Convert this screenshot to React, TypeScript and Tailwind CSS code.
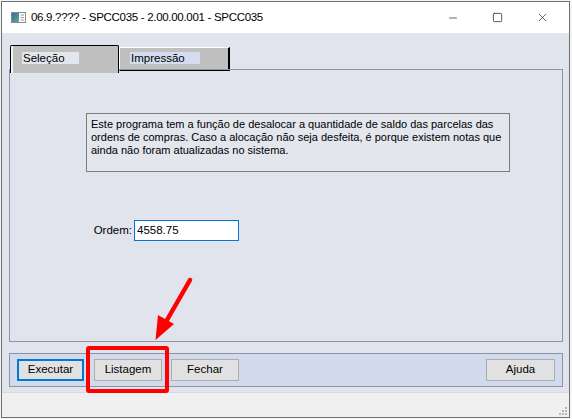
import { Minus, Square, X } from 'lucide-react'

const font = { fontFamily: '"Liberation Sans", Arial, sans-serif' }

function AppIcon() {
  return (
    <svg width="15" height="11" viewBox="0 0 15 11" className="shrink-0">
      <defs>
        <linearGradient id="ic" x1="0" y1="0" x2="1" y2="1">
          <stop offset="0" stopColor="#2f6fa8" />
          <stop offset="1" stopColor="#5fae7a" />
        </linearGradient>
      </defs>
      <rect x="0.5" y="0.5" width="14" height="10" fill="#fff" stroke="#8a8a8a" />
      <rect x="1" y="1" width="7" height="9" fill="url(#ic)" />
      <line x1="9.5" y1="3" x2="13" y2="3" stroke="#9a9a9a" />
      <line x1="9.5" y1="5.5" x2="13" y2="5.5" stroke="#9a9a9a" />
      <line x1="9.5" y1="8" x2="13" y2="8" stroke="#9a9a9a" />
    </svg>
  )
}

function Btn({ label, focused, className = '' }: { label: string; focused?: boolean; className?: string }) {
  return (
    <div
      className={
        'h-[22px] flex items-center justify-center text-[11.5px] text-black bg-[#e1e1e1] ' +
        (focused ? 'border-2 border-[#0078d7] ' : 'border border-[#adadad] ') +
        className
      }
    >
      {label}
    </div>
  )
}

export default function App() {
  return (
    <div className="relative w-[572px] h-[419px] bg-[#f4f4f4] overflow-hidden" style={font}>
      {/* window */}
      <div className="ml-[1px] mt-[1px] w-[569px] h-[417px] border border-[#707070] flex flex-col bg-white">
        {/* title bar */}
        <div className="h-[31px] shrink-0 bg-white flex items-center pl-[9px]">
          <AppIcon />
          <span className="ml-[5px] text-[11.5px] tracking-[-0.3px] text-black">06.9.???? - SPCC035 - 2.00.00.001 - SPCC035</span>
          <div className="ml-auto flex items-center h-full">
            <div className="w-[45px] flex justify-center"><Minus className="w-[12px] h-[12px]" strokeWidth={1.2} /></div>
            <div className="w-[45px] flex justify-center"><Square className="w-[11px] h-[11px]" strokeWidth={1.4} absoluteStrokeWidth /></div>
            <div className="w-[45px] flex justify-center mr-[4px]"><X className="w-[13px] h-[13px]" strokeWidth={1.1} /></div>
          </div>
        </div>

        {/* content */}
        <div className="flex-1 bg-[#e1e4ec] pl-[7px] pr-[6px] pt-[12px] flex flex-col text-[11px] text-black">
          {/* tabs */}
          <div className="h-[24px] flex items-start shrink-0">
            <div className="relative z-10 ml-[1px] w-[109px] h-[28px] bg-[#c0c0c0] border border-b-0 border-black rounded-t-[2px] shadow-[inset_2px_0_0_#f4f4f4] pl-[11px] pt-[6px]">
              <div className="w-[57px] h-[12px] bg-[#e4e6ee] leading-[12px] pl-[1px] text-[11.5px]">Seleção</div>
            </div>
            <div className="mt-[2px] w-[111px] h-[24px] bg-[#c0c0c0] border-t border-l border-white border-r-2 border-b border-r-black border-b-black pl-[10px] pt-[4px]">
              <div className="w-[70px] h-[12px] bg-[#d5dcef] leading-[12px] pl-[1px] text-[11.5px]">Impressão</div>
            </div>
          </div>

          {/* tab panel */}
          <div className="h-[273px] shrink-0 border border-[#8d95a3] flex flex-col">
            <div className="ml-[76px] mt-[43px] w-[424px] h-[59px] border border-[#7d7d7d] bg-[#e3e6ed] pl-[4px] pr-[2px] pt-[4px] leading-[13px]">
              Este programa tem a função de desalocar a quantidade de saldo das parcelas das ordens de compras. Caso a alocação não seja desfeita, é porque existem notas que ainda não foram atualizadas no sistema.
            </div>
            <div className="mt-[48px] flex items-center text-[11.5px]">
              <span className="w-[122px] text-right">Ordem:</span>
              <div className="ml-[2px] w-[105px] h-[21px] border border-[#0078d7] bg-white flex items-center pl-[2px]">4558.75</div>
            </div>
          </div>

          {/* button bar */}
          <div className="mt-[11px] h-[34px] shrink-0 border border-[#8d95a3] bg-[#d2dbed] flex items-center px-[7px]">
            <Btn label="Executar" focused className="w-[67px]" />
            <Btn label="Listagem" className="ml-[10px] w-[68px]" />
            <Btn label="Fechar" className="ml-[9px] w-[68px]" />
            <Btn label="Ajuda" className="ml-auto w-[69px]" />
          </div>
        </div>

        {/* status bar */}
        <div className="h-[25px] shrink-0 bg-[#f0f0f0] border-t border-[#d9d9d9] flex justify-end items-end p-[2px]">
          <svg width="8" height="8" viewBox="0 0 8 8">
            <rect x="6" y="0" width="2" height="2" fill="#b5b5b5" />
            <rect x="3" y="3" width="2" height="2" fill="#b5b5b5" />
            <rect x="6" y="3" width="2" height="2" fill="#b5b5b5" />
            <rect x="0" y="6" width="2" height="2" fill="#b5b5b5" />
            <rect x="3" y="6" width="2" height="2" fill="#b5b5b5" />
            <rect x="6" y="6" width="2" height="2" fill="#b5b5b5" />
          </svg>
        </div>
      </div>

      {/* red annotation */}
      <div className="absolute left-[86px] top-[346px] w-[83px] h-[47px] border-4 border-[#ff0000] rounded-[3px]" />
      <svg className="absolute left-0 top-0" width="572" height="419" viewBox="0 0 572 419">
        <line x1="190" y1="280" x2="167" y2="320" stroke="#ff0000" strokeWidth="4.5" strokeLinecap="round" />
        <polygon points="155.5,340 158,315 174,324" fill="#ff0000" />
      </svg>
    </div>
  )
}
